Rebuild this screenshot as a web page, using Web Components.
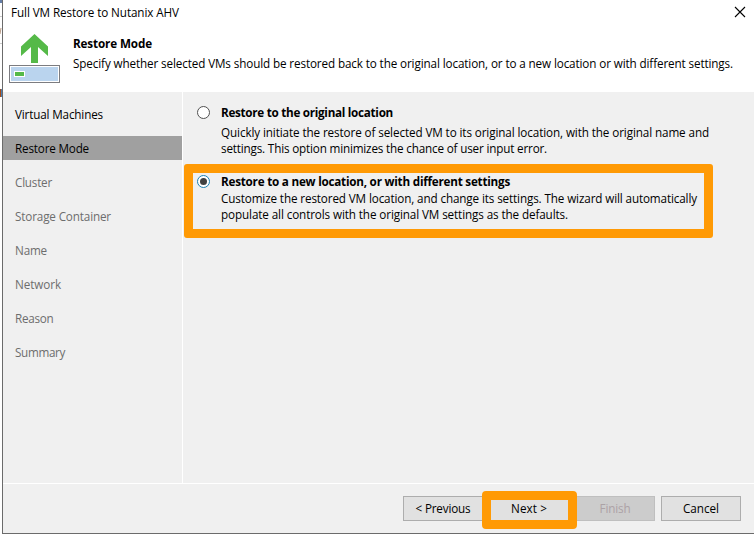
<!DOCTYPE html>
<html lang="en">
<head>
<meta charset="utf-8">
<title>Full VM Restore to Nutanix AHV</title>
<style>
html,body{margin:0;width:754px;height:536px;overflow:hidden;background:#fff}
body{font:11.7px/16px "Segoe UI","Open Sans","Noto Sans",sans-serif;color:#000}
</style>
</head>
<body>
<restore-wizard></restore-wizard>
<script>
// Builds an element class from its shadow markup.
const define = (name, html, after) => customElements.define(name, class extends HTMLElement {
  connectedCallback() {
    if (this.shadowRoot) return;
    this.attachShadow({mode: 'open'}).innerHTML = html;
    if (after) after(this);
  }
});

// One line of text, tracked so that it takes up the width given in "w".
define('fit-text', `<style>
:host{display:block;white-space:nowrap;line-height:16px;height:16px}
span{display:inline-block}
</style><span></span>`, el => {
  const s = el.shadowRoot.querySelector('span');
  s.textContent = el.getAttribute('text');
  const w = +el.getAttribute('w');
  s.style.letterSpacing = (w - s.getBoundingClientRect().width) / s.textContent.length + 'px';
});

define('title-bar', `<style>
:host{display:flex;justify-content:space-between;height:28px;padding:4px 8px 0 8px;box-sizing:border-box}
svg{display:block;margin-top:2px}
</style>
<fit-text text="Full VM Restore to Nutanix AHV" w="168"></fit-text>
<svg width="12" height="12"><path d="M1 1L11 11M11 1L1 11" stroke="#000" stroke-width="1.1" fill="none"/></svg>`);

define('wizard-header', `<style>
:host{display:flex;height:64px;padding-left:6px;box-sizing:border-box}
svg{display:block;margin-top:5px}
div{margin:7px 0 0 13px;display:grid;row-gap:4px;align-content:start}
b{display:block}
</style>
<svg width="51" height="50"><path d="M25.5 1L39 13.5V23L29 14V30H22V14L12 23V13.5Z" fill="#55b948"/>
<rect x=".5" y="32.5" width="50" height="17" fill="#fff" stroke="#7c7c80"/>
<rect x="2" y="34" width="47" height="14" fill="#bad4ee"/><rect x="5" y="38" width="11" height="6" fill="#fff"/><rect x="6" y="39" width="9" height="4" fill="#55b948"/></svg>
<div><b><fit-text text="Restore Mode" w="79"></fit-text></b>
<fit-text text="Specify whether selected VMs should be restored back to the original location, or to a new location or with different settings." w="660"></fit-text></div>`);

define('nav-step', `<style>
:host{display:flex;height:24px;padding:4px 12px 0;box-sizing:border-box;color:#6d6d6d}
:host([done]){color:#000}
:host([current]){color:#000;background:#a0a0a0}
</style><slot></slot>`);

define('wizard-nav', `<style>
:host{display:flex;flex-direction:column;gap:10px;width:180px;padding-top:10px;box-sizing:border-box;border-right:1px solid #fff}
</style>
<nav-step done><fit-text text="Virtual Machines" w="88"></fit-text></nav-step>
<nav-step current><fit-text text="Restore Mode" w="74"></fit-text></nav-step>
<nav-step><fit-text text="Cluster" w="37"></fit-text></nav-step>
<nav-step><fit-text text="Storage Container" w="96"></fit-text></nav-step>
<nav-step><fit-text text="Name" w="32"></fit-text></nav-step>
<nav-step><fit-text text="Network" w="46"></fit-text></nav-step>
<nav-step><fit-text text="Reason" w="38.5"></fit-text></nav-step>
<nav-step><fit-text text="Summary" w="50"></fit-text></nav-step>`);

define('radio-option', `<style>
:host{display:grid;grid-template-columns:13px auto;column-gap:11px;justify-content:start}
svg{display:block;margin-top:2px}
circle{fill:#fff;stroke:#505050}
.dot{display:none}
:host([checked]) circle{stroke:#1a7fb0}
:host([checked]) .dot{display:block}
.t{display:block;font-weight:bold}
.d{margin-top:var(--gap,4px)}
</style>
<svg width="13" height="13"><circle cx="6.5" cy="6.5" r="6"/><circle class="dot" cx="6.5" cy="6.5" r="3.5" style="stroke:none;fill:#404040"/></svg>
<div><span class="t"><slot name="title"></slot></span><div class="d"><slot></slot></div></div>`);

define('wizard-button', `<style>
:host{display:flex;justify-content:center;width:80px;height:25px;box-sizing:border-box;border:1px solid #adadad;background:#e1e1e1;padding-top:3px;position:relative}
:host([disabled]){background:#ccc;border-color:#bfbfbf;color:#aca2a6}
:host([marked])::after{content:"";position:absolute;left:-8px;top:-6px;width:77px;height:20px;border:9px solid #ff9a05;border-radius:4px;z-index:1}
</style><slot></slot>`);

define('restore-wizard', `<style>
:host{display:block;height:536px;padding-left:2px;box-sizing:border-box;position:relative}
.win{height:534px;box-sizing:border-box;border:solid #6b6b6b;border-width:0 0 1px 1px;display:flex;flex-direction:column}
.mid{display:flex;height:391px;background:#f0f0f0}
main{flex:1;padding:12px 0 0 14px;position:relative}
radio-option+radio-option{margin-top:17px;--gap:1px}
.mark{position:absolute;left:1px;top:72px;width:511px;height:56px;border:9px solid #ff9a05;border-radius:3px}
footer{flex:1;background:#f0f0f0;border-top:1px solid #fff;display:flex;justify-content:flex-end;gap:6px;padding:12px 13px 0 0}
.edge{position:absolute;left:0;top:0}
</style>
<svg class="edge" width="2" height="100"><path d="M0 16.5H2M0 43.5H2" stroke="#ccc"/><path d="M1 0V3" stroke="#667fa8" stroke-width="2"/><path d="M1 28L0 34" stroke="#b99b86"/><path d="M.5 89V97" stroke="#a84b16"/><path d="M1.5 89V97" stroke="#4a7db0"/></svg>
<div class="win">
<title-bar></title-bar><wizard-header></wizard-header>
<div class="mid"><wizard-nav></wizard-nav><main>
<radio-option><fit-text slot="title" text="Restore to the original location" w="172"></fit-text>
<fit-text text="Quickly initiate the restore of selected VM to its original location, with the original name and" w="488"></fit-text>
<fit-text text="settings. This option minimizes the chance of user input error." w="326"></fit-text></radio-option>
<radio-option checked><fit-text slot="title" text="Restore to a new location, or with different settings" w="289"></fit-text>
<fit-text text="Customize the restored VM location, and change its settings. The wizard will automatically" w="476"></fit-text>
<fit-text text="populate all controls with the original VM settings as the defaults." w="347"></fit-text></radio-option>
<div class="mark"></div></main></div>
<footer>
<wizard-button><fit-text text="&lt; Previous" w="55"></fit-text></wizard-button>
<wizard-button marked><fit-text text="Next &gt;" w="36"></fit-text></wizard-button>
<wizard-button disabled><fit-text text="Finish" w="31"></fit-text></wizard-button>
<wizard-button><fit-text text="Cancel" w="36"></fit-text></wizard-button>
</footer></div>`);
</script>
</body>
</html>
